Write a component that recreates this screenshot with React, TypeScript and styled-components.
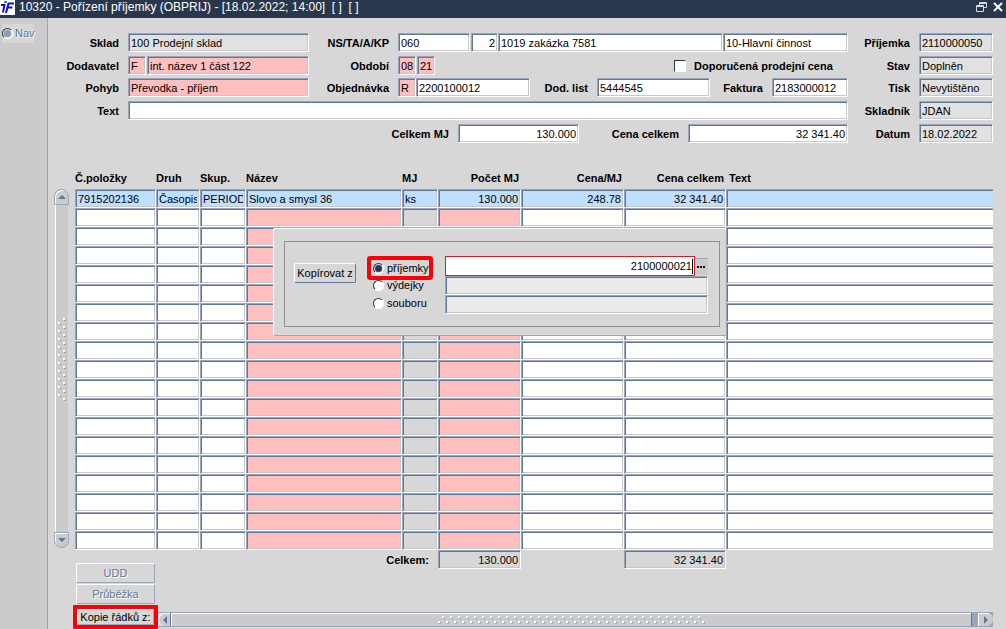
import React, { useState } from "react";
import styled, { createGlobalStyle, css } from "styled-components";

const color = {
  face: "#d7d7d7",
  trough: "#cbcbcb",
  light: "#98a5bb",
  dark: "#5f7799",
  title: "#29374d",
  required: "#ffbfbf",
  current: "#bfdfff",
  readOnly: "#e1e1e1",
  disabled: "#ebebeb",
  mark: "#fb0007",
};

const Global = createGlobalStyle`
  *, *::before, *::after { box-sizing: border-box; }
  body { margin: 0; background: ${color.face}; }
  body, input, button { font: 11px/13px "Liberation Sans", Arial, sans-serif; color: #000; }
`;

const Page = styled.div`
  min-height: 100vh;
  display: flex;
  flex-direction: column;
`;

const TitleBar = styled.header`
  height: 18px;
  display: flex;
  align-items: flex-start;
  gap: 4px;
  padding: 0 2px 0 0;
  background: ${color.title};
  color: #fff;
`;

const Title = styled.h1`
  flex: 1;
  margin: 0;
  font-size: 12px;
  line-height: 15px;
  font-weight: 400;
  white-space: pre;
`;

const WindowButton = styled.button`
  display: flex;
  padding: 1px 0 0;
  border: 0;
  background: none;
`;

const Body = styled.div`
  flex: 1;
  display: flex;
`;

const Sidebar = styled.nav`
  width: 48px;
  flex: none;
  padding: 6px 0 0 2px;
  background: ${color.trough};
  border-right: 1px solid ${color.light};
`;

const NavItem = styled.label`
  display: flex;
  align-items: center;
  gap: 2px;
  width: 32px;
  height: 19px;
  background: ${color.face};
  color: ${color.dark};
  text-shadow: 1px 1px 0 #fff;
`;

const Main = styled.main`
  flex: 1;
  min-width: 0;
  padding: 15px 13px 1px 6px;
`;

const Head = styled.div`
  display: flex;
`;

const HeadRows = styled.div<{ $grow?: boolean }>`
  flex: ${(p) => (p.$grow ? "1" : "none")};
  min-width: 0;
  display: grid;
  grid-template-rows: 23px 22px 23px 23px 23px;
`;

const HeadRow = styled.div`
  display: flex;
  align-items: flex-start;
`;

const Caption = styled.label<{ $w?: number; $push?: boolean }>`
  flex: none;
  width: ${(p) => (p.$w ? `${p.$w}px` : "auto")};
  margin-left: ${(p) => (p.$push ? "auto" : "0")};
  padding-right: 9px;
  font-weight: 700;
  line-height: 20px;
  text-align: right;
  white-space: nowrap;
`;

const TickCaption = styled(Caption)`
  text-align: left;
`;

const sunken = css`
  border: 1px solid;
  border-color: ${color.light} #fff #fff ${color.light};
  border-radius: 1px;
  box-shadow: inset 1px 1px 0 ${color.dark}, inset -1px -1px 0 #c8c8c8;
`;

const Field = styled.input<{ $w?: number; $bg?: string; $right?: boolean; $gap?: boolean; $open?: boolean }>`
  ${sunken}
  display: block;
  flex: ${(p) => (p.$w ? "none" : "1")};
  width: ${(p) => (p.$w ? `${p.$w}px` : "100%")};
  min-width: 0;
  height: 19px;
  margin: 0 ${(p) => (p.$gap ? "1px" : "0")} 0 0;
  padding: 1px 2px 0;
  background: ${(p) => p.$bg ?? "#fff"};
  text-align: ${(p) => (p.$right ? "right" : "left")};
  outline: 0;
  ${(p) =>
    p.$open &&
    css`
      border-right: 0;
      box-shadow: inset 1px 1px 0 ${color.dark}, inset 0 -1px 0 #c8c8c8;
    `}
`;

const Tick = styled.input`
  appearance: none;
  flex: none;
  width: 12px;
  height: 12px;
  margin: 4px 8px 0 auto;
  background: #fff;
  border: 1px solid;
  border-color: ${color.title} #fff #fff ${color.title};
`;

const Radio = styled.input`
  appearance: none;
  flex: none;
  width: 11px;
  height: 11px;
  margin: 0;
  padding: 1px;
  border: 1px solid;
  border-color: ${color.title} #fff #fff ${color.title};
  border-radius: 50%;
  background: #fff;
  &:checked {
    background: ${color.title} content-box;
  }
  &:disabled {
    background: #8f9db4 content-box;
  }
`;

const GridArea = styled.section`
  position: relative;
  display: flex;
  margin-top: 20px;
`;

const VScroll = styled.div`
  flex: none;
  width: 15px;
  margin: 22px 6px 2px 0;
  display: flex;
  flex-direction: column;
`;

const VTrack = styled.div`
  flex: 1;
  margin: 0 1px;
  padding-bottom: 18px;
  display: flex;
  align-items: center;
  justify-content: center;
  background: ${color.trough};
  border-left: 1px solid #fff;
`;

const VButton = styled.button<{ $down?: boolean }>`
  height: 16px;
  padding: 0;
  display: flex;
  align-items: center;
  justify-content: center;
  background: ${color.trough};
  border: 1px solid ${color.light};
  border-radius: ${(p) => (p.$down ? "0 0 8px 8px" : "8px 8px 0 0")};
  box-shadow: inset 1px 1px 0 #fff;
`;

const Table = styled.table`
  flex: 1;
  width: 100%;
  min-width: 0;
  table-layout: fixed;
  border-spacing: 0;
`;

const HeadCell = styled.th<{ $right?: boolean; $w?: number }>`
  width: ${(p) => (p.$w ? `${p.$w}px` : "auto")};
  height: 22px;
  padding: 5px ${(p) => (p.$right ? "2px" : "0")} 0 0;
  vertical-align: top;
  text-align: ${(p) => (p.$right ? "right" : "left")};
  white-space: nowrap;
  &:last-child {
    padding-left: 3px;
  }
`;

const Cell = styled.td`
  padding: 0;
  overflow: hidden;
`;

const Dialog = styled.section`
  position: absolute;
  left: 219px;
  top: 61px;
  width: 454px;
  height: 108px;
  padding: 12px 6px 9px 10px;
  background: ${color.face};
  border: 1px solid;
  border-color: #fff ${color.light} ${color.light} #fff;
  border-radius: 2px;
`;

const Frame = styled.div`
  height: 86px;
  display: flex;
  align-items: flex-start;
  padding: 14px 11px 0 9px;
  border: 1px solid #8f8f8f;
`;

const Button = styled.button`
  height: 20px;
  padding: 0 2px;
  background: ${color.face};
  border: 1px solid;
  border-color: #fff ${color.light} ${color.light} #fff;
  border-radius: 2px;
  white-space: nowrap;
  &:disabled {
    color: ${color.dark};
    text-shadow: 1px 1px 0 #fff;
  }
`;

const CopyButton = styled(Button)`
  width: 62px;
  margin: 7px 15px 0 0;
  border-color: #fff ${color.dark} ${color.dark} #fff;
`;

const Options = styled.div`
  width: 58px;
  margin-right: 16px;
  padding-top: 4px;
`;

const Option = styled.label<{ $marked?: boolean }>`
  display: flex;
  align-items: center;
  gap: 3px;
  height: ${(p) => (p.$marked ? "16px" : "18px")};
  padding-left: 2px;
  border-radius: 1px;
  box-shadow: ${(p) => (p.$marked ? `0 0 0 4px ${color.mark}` : "none")};
`;

const Sources = styled.div`
  flex: 1;
  min-width: 0;
`;

const SourceRow = styled.div`
  display: flex;
`;

const Active = styled.div`
  flex: 1;
  display: flex;
  align-items: center;
  height: 20px;
  background: #fff;
  border: 1px solid #e0191c;
`;

const ActiveInput = styled.input`
  flex: 1;
  min-width: 0;
  height: 18px;
  padding: 0;
  border: 0;
  outline: 0;
  background: none;
  text-align: right;
`;

const Caret = styled.span`
  width: 1px;
  height: 15px;
  margin-right: 1px;
  background: #000;
`;

const MoreButton = styled.button`
  width: 13px;
  height: 17px;
  margin-top: 2px;
  padding: 0;
  display: flex;
  align-items: center;
  justify-content: center;
  background: ${color.trough};
  border: 0;
  border-top: 1px solid ${color.light};
`;

const Foot = styled.footer`
  display: flex;
  padding-left: 19px;
`;

const Actions = styled.div`
  flex: none;
  width: 85px;
  display: flex;
  flex-direction: column;
  align-items: center;
  gap: 1px;
  padding-top: 13px;
`;

const ActionButton = styled(Button)`
  width: 79px;
`;

const Marked = styled.div`
  align-self: stretch;
  display: flex;
  border: 4px solid ${color.mark};
  border-radius: 1px;
  ${Button} {
    flex: 1;
    height: 16px;
  }
`;

const FootRight = styled.div`
  flex: 1;
  min-width: 0;
  display: flex;
  flex-direction: column;
  justify-content: space-between;
  padding-bottom: 2px;
`;

const Totals = styled.div`
  display: flex;
`;

const Total = styled.output<{ $w: number; $after?: number }>`
  ${sunken}
  width: ${(p) => p.$w}px;
  height: 19px;
  margin-right: ${(p) => p.$after ?? 0}px;
  padding: 3px 2px 0;
  line-height: 13px;
  text-align: right;
`;

const HScroll = styled.div`
  height: 15px;
  display: flex;
  border: solid ${color.light};
  border-width: 1px 0;
`;

const HButton = styled.button<{ $end?: boolean }>`
  width: ${(p) => (p.$end ? "15px" : "12px")};
  padding: 0;
  display: flex;
  align-items: center;
  justify-content: center;
  border: 0;
  background: ${color.trough};
  border-left: 1px solid #fff;
  border-top: 1px solid #fff;
  border-radius: ${(p) => (p.$end ? "0 8px 8px 0" : "8px 0 0 8px")};
`;

const HTrack = styled.div`
  flex: 1;
  display: flex;
  align-items: center;
  justify-content: center;
  background: ${color.trough};
  border: solid ${color.dark};
  border-width: 0 1px;
  box-shadow: inset 1px 1px 0 #fff;
`;

const HEnd = styled.div`
  display: flex;
  padding-left: 6px;
  background: ${color.light};
`;

const Arrow = ({ d }: { d: string }) => (
  <svg width="8" height="8" viewBox="0 0 8 8" aria-hidden="true">
    <path d={d} fill={color.dark} />
  </svg>
);

const Dot = ({ x, y }: { x: number; y: number }) => (
  <g shapeRendering="crispEdges">
    <rect x={x + 1} y={y + 1} width="2" height="2" fill={color.light} />
    <rect x={x} y={y} width="2" height="2" fill="#fff" />
  </g>
);

const range = (n: number) => Array.from({ length: n }, (_, i) => i);

const VGrip = () => (
  <svg width="8" height="83" aria-hidden="true">
    {range(11).map((i) => <Dot key={`r${i}`} x={5} y={i * 8} />)}
    {range(10).map((i) => <Dot key={`l${i}`} x={0} y={i * 8 + 4} />)}
  </svg>
);

const HGrip = () => (
  <svg width="267" height="8" aria-hidden="true">
    {range(33).map((i) => <Dot key={`t${i}`} x={i * 8 + 4} y={0} />)}
    {range(34).map((i) => <Dot key={`b${i}`} x={i * 8} y={5} />)}
  </svg>
);

type Column = { title: string; w?: number; right?: boolean; bg?: string; value: string };

const columns: Column[] = [
  { title: "Č.položky", w: 81, value: "7915202136" },
  { title: "Druh", w: 44, value: "Časopis" },
  { title: "Skup.", w: 46, value: "PERIODIKA" },
  { title: "Název", w: 156, bg: color.required, value: "Slovo a smysl 36" },
  { title: "MJ", w: 36, bg: color.face, value: "ks" },
  { title: "Počet MJ", w: 83, right: true, bg: color.required, value: "130.000" },
  { title: "Cena/MJ", w: 103, right: true, value: "248.78" },
  { title: "Cena celkem", w: 102, right: true, value: "32 341.40" },
  { title: "Text", value: "" },
];

const side = [
  ["prijemka", "Příjemka", "2110000050"],
  ["stav", "Stav", "Doplněn"],
  ["tisk", "Tisk", "Nevytištěno"],
  ["skladnik", "Skladník", "JDAN"],
  ["datum", "Datum", "18.02.2022"],
];

const sources = ["příjemky", "výdejky", "souboru"];

export default function App() {
  const [source, setSource] = useState(0);
  return (
    <Page>
      <Global />
      <TitleBar>
        <svg width="15" height="15" viewBox="0 0 15 15" aria-hidden="true">
          <rect width="15" height="15" fill="#fff" />
          <path d="M1 5h3.5L3 12.5M14 3.5H8.5L6 13M7.5 7.5h5" fill="none" stroke="#0d13c4" strokeWidth="2" />
          <path d="M4.500 1h2.500l-.5 2h-2.500z" fill="#1565d8" />
        </svg>
        <Title>{"10320 - Pořízení příjemky (OBPRIJ) - [18.02.2022; 14:00]  [ ]  [ ]"}</Title>
        <WindowButton aria-label="Obnovit">
          <svg width="12" height="12" viewBox="0 0 12 12" fill="none" stroke="#d5d9df">
            <path d="M3.500 4V1.500h7v5H8M3 2.500h8M.5 4.500h7v6h-7zM0 5.500h8" />
          </svg>
        </WindowButton>
        <WindowButton aria-label="Zavřít">
          <svg width="12" height="12" viewBox="0 0 12 12" fill="none" stroke="#fff" strokeWidth="2">
            <path d="M2 2l8 8M10 2l-8 8" />
          </svg>
        </WindowButton>
      </TitleBar>
      <Body>
        <Sidebar>
          <NavItem>
            <Radio type="radio" disabled />
            Nav
          </NavItem>
        </Sidebar>
        <Main>
          <Head>
            <HeadRows $grow>
              <HeadRow>
                <Caption $w={74} htmlFor="sklad">Sklad</Caption>
                <Field id="sklad" $w={181} $bg={color.readOnly} readOnly value="100 Prodejní sklad" />
                <Caption $w={89} htmlFor="ns">NS/TA/A/KP</Caption>
                <Field id="ns" $w={72} $gap defaultValue="060" />
                <Field aria-label="TA" $w={27} $right defaultValue="2" />
                <Field aria-label="Zakázka" defaultValue="1019 zakázka 7581" />
                <Field aria-label="Činnost" $w={125} defaultValue="10-Hlavní činnost" />
              </HeadRow>
              <HeadRow>
                <Caption $w={74} htmlFor="dodavatel">Dodavatel</Caption>
                <Field id="dodavatel" $w={18} $gap $bg={color.required} defaultValue="F" />
                <Field aria-label="Název dodavatele" $w={162} $bg={color.required} defaultValue="int. název 1 část 122" />
                <Caption $w={89} htmlFor="obdobi">Období</Caption>
                <Field id="obdobi" $w={18} $gap $bg={color.required} defaultValue="08" />
                <Field aria-label="Rok" $w={18} $bg={color.required} defaultValue="21" />
                <Tick id="cena" type="checkbox" />
                <TickCaption $w={154} htmlFor="cena">Doporučená prodejní cena</TickCaption>
              </HeadRow>
              <HeadRow>
                <Caption $w={74} htmlFor="pohyb">Pohyb</Caption>
                <Field id="pohyb" $w={181} $bg={color.required} defaultValue="Převodka - příjem" />
                <Caption $w={89} htmlFor="obj">Objednávka</Caption>
                <Field id="obj" $w={18} $bg={color.required} defaultValue="R" />
                <Field aria-label="Číslo objednávky" defaultValue="2200100012" />
                <Caption $w={67} htmlFor="dod">Dod. list</Caption>
                <Field id="dod" $w={113} defaultValue="5444545" />
                <Caption $w={62} htmlFor="fak">Faktura</Caption>
                <Field id="fak" $w={76} defaultValue="2183000012" />
              </HeadRow>
              <HeadRow>
                <Caption $w={74} htmlFor="text">Text</Caption>
                <Field id="text" />
              </HeadRow>
              <HeadRow>
                <Caption $push htmlFor="cmj">Celkem MJ</Caption>
                <Field id="cmj" $w={121} $right defaultValue="130.000" />
                <Caption $w={109} htmlFor="cc">Cena celkem</Caption>
                <Field id="cc" $w={160} $right defaultValue="32 341.40" />
              </HeadRow>
            </HeadRows>
            <HeadRows>
              {side.map(([id, label, value]) => (
                <HeadRow key={id}>
                  <Caption $w={71} htmlFor={id}>{label}</Caption>
                  <Field id={id} $w={74} $bg={color.readOnly} readOnly value={value} />
                </HeadRow>
              ))}
            </HeadRows>
          </Head>

          <GridArea>
            <VScroll>
              <VButton aria-label="Nahoru"><Arrow d="M0 6l4-4 4 4z" /></VButton>
              <VTrack><VGrip /></VTrack>
              <VButton $down aria-label="Dolů"><Arrow d="M0 2h8L4 6z" /></VButton>
            </VScroll>
            <Table>
              <thead>
                <tr>
                  {columns.map((c) => (
                    <HeadCell key={c.title} $w={c.w} $right={c.right} scope="col">{c.title}</HeadCell>
                  ))}
                </tr>
              </thead>
              <tbody>
                {range(19).map((r) => (
                  <tr key={r}>
                    {columns.map((c) => (
                      <Cell key={c.title}>
                        <Field
                          aria-label={c.title}
                          $right={c.right}
                          $open={!c.w}
                          $bg={r === 0 ? color.current : c.bg}
                          defaultValue={r === 0 ? c.value : ""}
                        />
                      </Cell>
                    ))}
                  </tr>
                ))}
              </tbody>
            </Table>

            <Dialog aria-label="Kopírovat z">
              <Frame>
                <CopyButton>Kopírovat z</CopyButton>
                <Options>
                  {sources.map((s, i) => (
                    <Option key={s} $marked={i === 0}>
                      <Radio type="radio" name="source" checked={source === i} onChange={() => setSource(i)} />
                      {s}
                    </Option>
                  ))}
                </Options>
                <Sources>
                  <SourceRow>
                    <Active>
                      <ActiveInput aria-label="Číslo příjemky" defaultValue="2100000021" />
                      <Caret />
                    </Active>
                    <MoreButton aria-label="Vybrat">
                      <svg width="9" height="2" aria-hidden="true">
                        <path d="M0 1h2M3 1h2M6 1h2" stroke="#2a0a0a" strokeWidth="2" />
                      </svg>
                    </MoreButton>
                  </SourceRow>
                  <Field aria-label="Číslo výdejky" $bg={color.disabled} readOnly />
                  <Field aria-label="Soubor" $bg={color.disabled} readOnly />
                </Sources>
              </Frame>
            </Dialog>
          </GridArea>

          <Foot>
            <Actions>
              <ActionButton disabled>UDD</ActionButton>
              <ActionButton disabled>Průběžka</ActionButton>
              <Marked><Button>Kopie řádků z:</Button></Marked>
            </Actions>
            <FootRight>
              <Totals>
                <Caption as="span" $w={280}>Celkem:</Caption>
                <Total $w={83} $after={103}>130.000</Total>
                <Total $w={102}>32 341.40</Total>
              </Totals>
              <HScroll>
                <HButton aria-label="Vlevo"><Arrow d="M6 0v8L2 4z" /></HButton>
                <HTrack><HGrip /></HTrack>
                <HEnd>
                  <HButton $end aria-label="Vpravo"><Arrow d="M2 0v8l4-4z" /></HButton>
                </HEnd>
              </HScroll>
            </FootRight>
          </Foot>
        </Main>
      </Body>
    </Page>
  );
}
